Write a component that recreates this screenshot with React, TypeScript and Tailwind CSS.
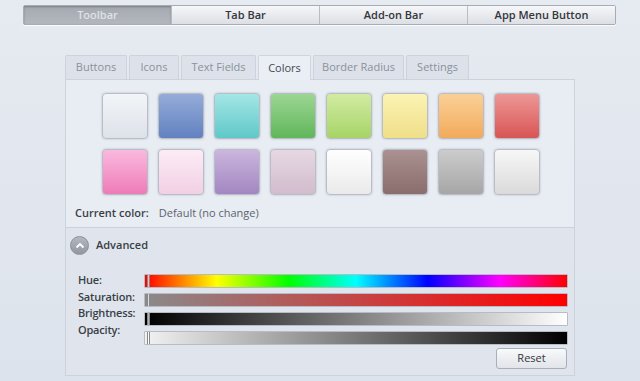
const font = { fontFamily: '"Open Sans", "Noto Sans", sans-serif' }

const segments = ["Toolbar", "Tab Bar", "Add-on Bar", "App Menu Button"]

const tabs: [string, string][] = [
  ["Buttons", "w-[62px]"],
  ["Icons", "w-[50px]"],
  ["Text Fields", "w-[75px]"],
  ["Colors", "w-[53px]"],
  ["Border Radius", "w-[91px]"],
  ["Settings", "w-[63px]"],
]

const swatches = [
  "from-[#f3f5f8] to-[#dde2e9]",
  "from-[#95acd9] to-[#6281c0]",
  "from-[#a3e6e6] to-[#5ec8c8]",
  "from-[#9cd693] to-[#5fb65a]",
  "from-[#d2eba2] to-[#a6d466]",
  "from-[#fcf3b4] to-[#efdf88]",
  "from-[#fad096] to-[#f2aa5a]",
  "from-[#ec9696] to-[#d85454]",
  "from-[#f9b9de] to-[#ee7ab8]",
  "from-[#fcebf5] to-[#f2d0e5]",
  "from-[#cbb6dd] to-[#a386c1]",
  "from-[#e7d8e3] to-[#d1bccd]",
  "from-[#ffffff] to-[#eaeaea]",
  "from-[#ab9191] to-[#8a6d6d]",
  "from-[#cccccc] to-[#a6a6a6]",
  "from-[#f7f7f7] to-[#dadada]",
]

const sliders = [
  "bg-[linear-gradient(to_right,#ff0000,#ffff00_17%,#00ff00_34%,#00ffff_50%,#0000ff_67%,#ff00ff_84%,#ff0000)]",
  "bg-[linear-gradient(to_right,#8a8a8a,#ff0000)]",
  "bg-[linear-gradient(to_right,#000000,#ffffff)]",
  "bg-[linear-gradient(to_right,#f2f2f2,#000000)]",
]

const labels = ["Hue:", "Saturation:", "Brightness:", "Opacity:"]

function Swatch({ cls }: { cls: string }) {
  return (
    <div className={`w-[46px] h-[46px] rounded-[4px] border border-[#b9bec6] shadow-[0_0_2px_rgba(120,130,150,0.5)] bg-gradient-to-b ${cls}`}></div>
  )
}

export default function App() {
  return (
    <div style={font} className="w-[640px] h-[381px] overflow-hidden bg-gradient-to-b from-[#e6eaf1] to-[#dde3ec] flex flex-col">
      <div className="ml-[23px] mt-[5px] w-[593px] h-[20px] flex border border-[#a7acb4] rounded-[2px] shadow-[0_1px_1px_rgba(255,255,255,0.9)]">
        {segments.map((s, i) => (
          <div
            key={s}
            className={`flex-1 flex items-center justify-center text-[11px] font-semibold ${i > 0 ? "border-l border-[#b8bcc3]" : ""} ${
              i === 0
                ? "bg-gradient-to-b from-[#a4a8b0] to-[#b3b7be] text-[#dfe2e6] shadow-[inset_0_1px_2px_rgba(0,0,0,0.25)]"
                : "bg-gradient-to-b from-[#f6f7f9] to-[#dcdfe4] text-[#33363b]"
            }`}
          >
            {s}
          </div>
        ))}
      </div>

      <div className="ml-[65px] mt-[29px] flex gap-[2px] h-[25px] items-end">
        {tabs.map(([t, w]) => (
          <div
            key={t}
            className={`${w} flex items-center justify-center text-[11px] border border-b-0 rounded-t-[2px] ${
              t === "Colors"
                ? "h-[25px] bg-[#eaeef5] border-[#cfd5de] text-[#444a52] relative top-[1px] z-10"
                : "h-[24px] bg-[#dde2ea] border-[#cdd3dc] text-[#8a919b]"
            }`}
          >
            {t}
          </div>
        ))}
      </div>

      <div className="ml-[65px] w-[510px] h-[297px] border border-[#cdd3dc] shadow-[inset_0_0_0_1px_rgba(255,255,255,0.8)] flex flex-col">
        <div className="h-[148px] bg-[#e8ecf3] border-b border-[#ccd2db] flex flex-col">
          <div className="ml-[36px] mt-[13px] grid grid-cols-8 gap-x-[10px] gap-y-[10px] w-[438px]">
            {swatches.map((c, i) => (
              <Swatch key={i} cls={c} />
            ))}
          </div>
          <div className="ml-[9px] mt-[11px] flex text-[11px] leading-[14px]">
            <span className="font-semibold text-[#3a3f46]">Current color:</span>
            <span className="ml-[10px] text-[#5d636c]">Default (no change)</span>
          </div>
        </div>

        <div className="flex-1 bg-[#e0e5ed] flex flex-col">
          <div className="ml-[4px] mt-[8px] flex items-center gap-[7px]">
            <div className="w-[19px] h-[19px] rounded-full bg-gradient-to-b from-[#b4b8bf] to-[#9297a0] border border-[#8a8f98] flex items-center justify-center">
              <svg width="10" height="7" viewBox="0 0 10 7">
                <path d="M1.5 5.5 L5 2 L8.5 5.5" fill="none" stroke="#ffffff" strokeWidth="1.8" />
              </svg>
            </div>
            <span className="text-[11px] font-semibold text-[#3a3f46]">Advanced</span>
          </div>

          <div className="mt-[19px] flex">
            <div className="w-[78px] pl-[12px] flex flex-col text-[11px] leading-[16.6px] font-semibold text-[#3a3f46] tracking-[-0.2px] -mt-[2px]">
              {labels.map((l) => (
                <span key={l}>{l}</span>
              ))}
            </div>
            <div className="flex flex-col gap-[5px]">
              {sliders.map((bg, i) => (
                <div key={i} className={`relative w-[424px] h-[14px] border border-[#b6bcc5] rounded-[1px] ${bg}`}>
                  <div className="absolute left-[2px] top-0 w-[3px] h-full bg-[rgba(255,255,255,0.7)] border-x border-[#888]"></div>
                </div>
              ))}
            </div>
          </div>

          <div className="mt-[3px] ml-[430px] w-[71px] h-[21px] rounded-[3px] border border-[#a9afb8] bg-gradient-to-b from-[#f8f9fa] to-[#e1e4e9] flex items-center justify-center text-[11px] text-[#33373d]">
            Reset
          </div>
        </div>
      </div>
    </div>
  )
}
